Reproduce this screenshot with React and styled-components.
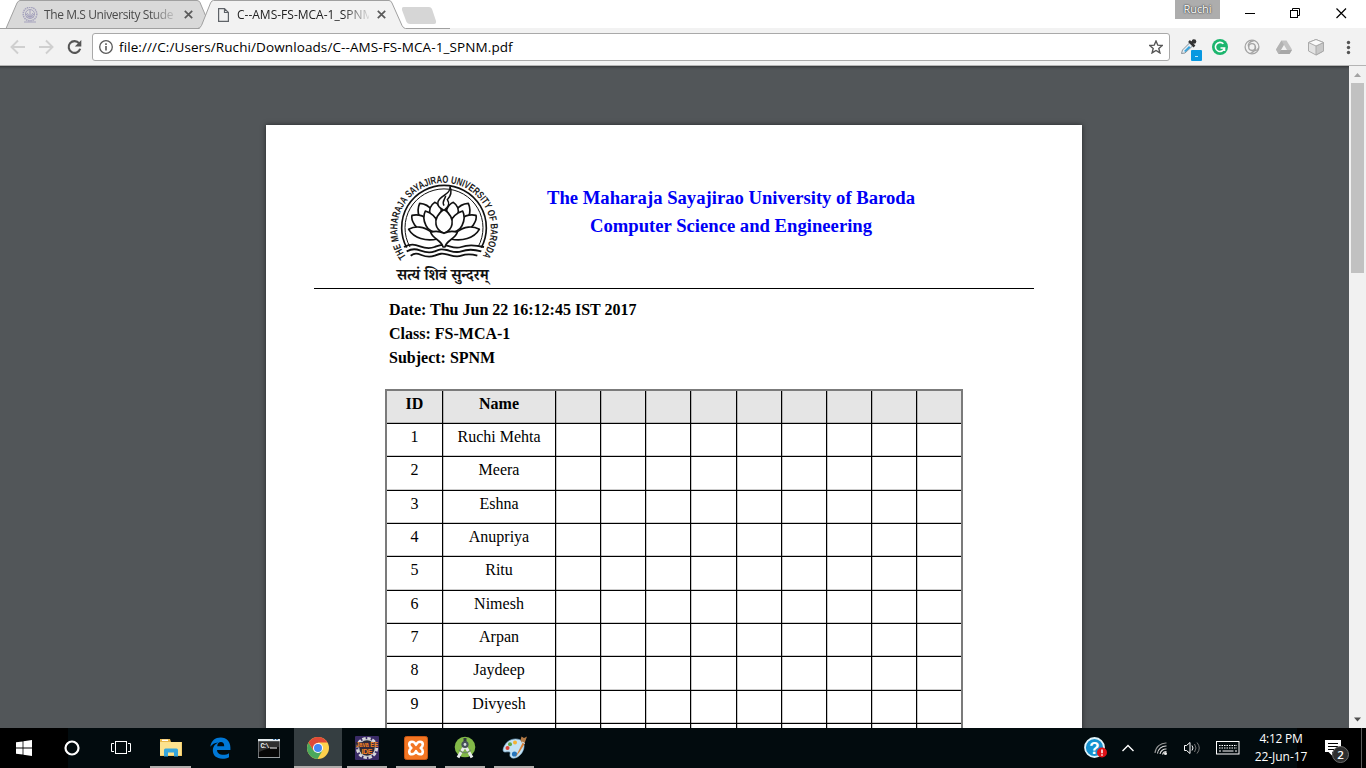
import React from "react";
import styled, { createGlobalStyle } from "styled-components";

const Global = createGlobalStyle`
  * { box-sizing: border-box; }
  body { margin: 0; overflow: hidden; background: #fff; }
`;
const ui = `"Open Sans", "Noto Sans", sans-serif`;

const Screen = styled.div`
  width: 1366px;
  height: 768px;
  display: flex;
  flex-direction: column;
  overflow: hidden;
  font-family: ${ui};
`;
const TitleBar = styled.div`
  height: 28px;
  flex: none;
  display: flex;
  align-items: flex-start;
  background: #fff;
  position: relative;
`;
const TabShapes = styled.svg`
  position: absolute;
  left: 0;
  top: 0;
`;
const Tab = styled.div`
  position: relative;
  display: flex;
  align-items: center;
  height: 28px;
  width: ${(p) => p.$w}px;
  padding: 1px 0 0 ${(p) => p.$pad}px;
  flex: none;
`;
const TabTitle = styled.span`
  width: ${(p) => p.$w}px;
  margin-left: ${(p) => p.$gap}px;
  margin-right: 8px;
  overflow: hidden;
  white-space: nowrap;
  font-size: 12px;
  line-height: 18px;
  letter-spacing: ${(p) => p.$ls}px;
  color: ${(p) => p.$color};
  mask-image: linear-gradient(to right, #000 80%, rgba(0, 0, 0, 0.1));
`;
const WindowControls = styled.div`
  margin-left: auto;
  display: flex;
`;
const Profile = styled.div`
  width: 45px;
  height: 19px;
  margin-right: 22px;
  background: #adadad;
  color: #fff;
  font-size: 11px;
  line-height: 18px;
  text-align: center;
  letter-spacing: -0.1px;
  text-shadow: 0 0 2px #333, 0 0 1px #333;
`;
const Toolbar = styled.div`
  height: 38px;
  flex: none;
  background: #f2f2f2;
  border-bottom: 1px solid #b4b4b4;
  display: flex;
  align-items: center;
  padding: 0 0 0 8px;
`;
const NavIcon = styled.svg`
  margin-right: ${(p) => p.$mr}px;
  flex: none;
`;
const Omnibox = styled.div`
  width: 1078px;
  height: 28px;
  border: 1px solid #a9a9a9;
  border-radius: 3px;
  background: #fff;
  display: flex;
  align-items: center;
  padding: 0 6px 0 6px;
`;
const Url = styled.span`
  font-size: 13.5px;
  line-height: 20px;
  color: #000;
  margin-left: 6px;
  letter-spacing: ${(p) => p.$ls}px;
  white-space: nowrap;
  flex: 1;
`;
const Extensions = styled.div`
  display: flex;
  align-items: center;
  padding-left: 11px;
`;

const Viewer = styled.div`
  height: 662px;
  flex: none;
  display: flex;
  background: #525659;
  overflow: hidden;
`;
const Canvas = styled.div`
  flex: 1;
  padding: 59px 0 0 266px;
  box-shadow: inset 0 4px 3px -3px rgba(0, 0, 0, 0.45);
`;
const Page = styled.div`
  width: 816px;
  height: 1056px;
  background: #fff;
  box-shadow: 0 0 5px rgba(0, 0, 0, 0.55);
  padding: 40px 48px;
`;
const Letterhead = styled.div`
  display: flex;
  height: 124px;
  padding-left: 66px;
  border-bottom: 1px solid #000;
`;
const Headings = styled.div`
  width: 450px;
  margin-left: -4px;
  padding-top: 19px;
  text-align: center;
  color: #0000f5;
  font: bold 18.67px/28px "Liberation Serif", serif;
`;
const Details = styled.div`
  padding: 9px 0 0 75px;
  height: 99.7px;
  font: bold 16px/24px "Liberation Serif", serif;
  color: #000;
`;
const Grid = styled.div`
  width: 578px;
  margin-left: 71px;
  border: 2px solid #7b7b7b;
  border-bottom: 0;
`;
const Row = styled.div`
  display: grid;
  grid-template-columns: 56px 113px repeat(8, 45.15px) 1fr;
  height: 33.33px;
  width: 574px;
  overflow: hidden;
  background: ${(p) => (p.$head ? "#e5e5e5" : "#fff")};
  font: ${(p) => (p.$head ? "bold" : "normal")} 16px/26px "Liberation Serif", serif;
  color: #000;
`;
const Cell = styled.div`
  border-right: 1px solid #000;
  border-bottom: 1px solid #000;
  text-align: center;
  white-space: nowrap;
  & + & { box-shadow: inset 1px 0 0 rgba(0, 0, 0, 0.22), inset 0 -1px 0 rgba(0, 0, 0, 0.2); }
  &:first-child { box-shadow: inset 0 -1px 0 rgba(0, 0, 0, 0.2); }
  &:last-child { border-right: 0; }
`;

const ScrollTrack = styled.div`
  width: 17px;
  background: #f1f1f1;
  display: flex;
  flex-direction: column;
  align-items: center;
`;
const ScrollThumb = styled.div`
  width: 13px;
  height: 190px;
  background: #c1c1c1;
  margin-bottom: auto;
`;

const Taskbar = styled.div`
  height: 40px;
  flex: none;
  display: flex;
  background: linear-gradient(to right, #000 68px, #020b0e 68px 1297px, #000 1297px);
`;
const TaskItem = styled.div`
  width: ${(p) => p.$w || 49}px;
  height: 40px;
  display: flex;
  align-items: center;
  justify-content: center;
  padding-right: 1px;
  background: ${(p) => (p.$active ? "#353e41" : "transparent")};
  background-clip: padding-box;
  border-right: ${(p) => (p.$active ? 1 : 0)}px solid transparent;
  position: relative;
  &::after {
    content: "";
    display: ${(p) => (p.$line ? "block" : "none")};
    position: absolute;
    bottom: 0;
    left: ${(p) => (p.$active ? 0 : 4)}px;
    right: ${(p) => (p.$active ? 0 : 5)}px;
    height: 2px;
    background: #b0aeac;
  }
`;
const Tray = styled.div`
  margin-left: auto;
  display: flex;
  align-items: center;
`;
const TrayIcon = styled.svg`
  margin-right: ${(p) => p.$mr}px;
  flex: none;
`;
const Clock = styled.div`
  width: 56px;
  color: #fff;
  font-size: 12px;
  line-height: 18px;
  text-align: center;
  letter-spacing: -0.25px;
  white-space: nowrap;
`;
const ClockDate = styled.div`
  letter-spacing: -0.05px;
`;
const Notifications = styled.div`
  position: relative;
  width: 41px;
  height: 40px;
  margin-left: 16px;
  &::after {
    content: "";
    position: absolute;
    right: 4px;
    top: 0;
    width: 1px;
    height: 40px;
    background: #5a5a5a;
  }
`;
const Badge = styled.span`
  position: absolute;
  left: 7px;
  top: 18px;
  width: 17px;
  height: 17px;
  border-radius: 50%;
  background: #2e2e2e;
  border: 1px solid #6c6c6c;
  color: #fff;
  font-size: 11.5px;
  font-weight: 600;
  line-height: 15px;
  text-align: center;
`;
const NoticeIcon = styled.svg`
  margin-top: 12px;
`;

const CloseX = () => (
  <svg width="9" height="9" viewBox="0 0 9 9">
    <path d="M0.8 0.8L8.2 8.2M8.2 0.8L0.8 8.2" stroke="#5a5a5a" strokeWidth="1.7" />
  </svg>
);

const Petals = () => (
  <g fill="#fff" stroke="#111" strokeWidth="5" strokeLinejoin="round">
    <path d="M118 156C112 140 114 126 119 115C136 116 148 124 156 136L160 170Z" />
    <path d="M266 156C272 140 270 126 265 115C248 116 236 124 228 136L224 170Z" />
    <path d="M150 150C146 132 152 120 164 112C174 116 180 124 184 134L182 168Z" />
    <path d="M234 150C238 132 232 120 220 112C210 116 204 124 200 134L202 168Z" />
    <path d="M104 180C96 168 94 158 96 151C116 146 138 154 150 170L160 204C134 204 114 196 104 180Z" />
    <path d="M280 180C288 168 290 158 288 151C268 146 246 154 234 170L224 204C250 204 270 196 280 180Z" />
    <path d="M86 193C106 182 132 184 152 200C160 208 166 214 172 222C138 230 102 220 86 193Z" />
    <path d="M298 193C278 182 252 184 232 200C224 208 218 214 212 222C246 230 282 220 298 193Z" />
    <path d="M138 182C130 166 130 150 136 138C156 144 168 158 174 174L184 206C160 204 144 196 138 182Z" />
    <path d="M246 182C254 166 254 150 248 138C228 144 216 158 210 174L200 206C224 204 240 196 246 182Z" />
    <path d="M192 132C210 146 219 162 216 178C214 192 203 200 192 205C181 200 170 192 168 178C165 162 174 146 192 132Z" />
    <path d="M152 202C168 196 182 200 192 205C202 200 216 196 232 202C226 222 198 226 195 246H189C186 226 158 222 152 202Z" />
  </g>
);

const Emblem = () => (
  <svg width="130" height="124" viewBox="0 0 390 372">
    <defs>
      <path id="ring" d="M79 276A140 140 0 1 1 305 276" />
    </defs>
    <text fontFamily="'Liberation Sans Narrow', 'Liberation Sans', sans-serif" fontWeight="bold" fontSize="31" fill="#1c1c1c">
      <textPath href="#ring" textLength="612" lengthAdjust="spacingAndGlyphs">THE MAHARAJA SAYAJIRAO UNIVERSITY OF BARODA</textPath>
    </text>
    <g fill="none" stroke="#111">
      <path d="M80 248A127 127 0 1 1 304 248" strokeWidth="5" />
      <path d="M90 246A117 117 0 1 1 294 246" strokeWidth="3" />
      <g strokeWidth="5.5">
        <path d="M72 246C92 236 104 238 120 244S148 252 164 246S184 238 200 242S228 252 244 246S276 238 312 246" />
        <path d="M80 259C98 250 108 252 122 257S148 265 164 259S184 251 200 255S228 265 244 259S276 251 304 259" />
        <path d="M92 272C104 263 112 265 124 270S148 278 164 272S184 264 200 268S228 278 244 272S272 266 292 272" />
      </g>
    </g>
    <Petals />
    <path d="M210 64C214 88 180 90 174 110C170 124 182 130 192 136C204 128 210 116 202 104C214 92 216 80 210 64ZM197 92C196 104 184 108 192 122" fill="#fff" stroke="#111" strokeWidth="4.5" />
    <text x="50" y="346" fontFamily="'Noto Serif Devanagari', 'Noto Sans Devanagari', 'Noto Sans', serif" fontWeight="bold" fontSize="48" fill="#111" textLength="276" lengthAdjust="spacingAndGlyphs">सत्यं शिवं सुन्दरम्</text>
  </svg>
);

const StartIcon = () => (
  <svg width="16" height="16" viewBox="0 0 16 16" fill="#fff">
    <path d="M0 2.3L6.6 1.4V7.6H0ZM7.4 1.3L16 0V7.6H7.4ZM0 8.4H6.6V14.6L0 13.7ZM7.4 8.4H16V16L7.4 14.8Z" />
  </svg>
);
const TaskViewIcon = () => (
  <svg width="22" height="16" viewBox="0 0 22 16" fill="none" stroke="#fff">
    <rect x="5.5" y="1.5" width="11" height="12" />
    <path d="M4 3.5H1.5V11.5H4M18 3.5H20.5V11.5H18" />
  </svg>
);
const FolderIcon = () => (
  <svg width="22" height="20" viewBox="0 0 22 20">
    <path d="M0 1H10L11 4H22V18H0Z" fill="#e9b84a" />
    <path d="M2 1.6H8V3H2Z" fill="#fff" />
    <path d="M0 4H21.5V17.5H0Z" fill="#fce28e" />
    <path d="M4 18.5V12Q4 10.5 5.5 10.5H16.500Q18 10.500 18 12V18.500H14V14.500H8V18.500Z" fill="#35a6dd" />
  </svg>
);
const EdgeIcon = () => (
  <svg width="21" height="22" viewBox="0 0 21 22">
    <path d="M0.300 9.800C1.200 3.500 5.200 0.400 10.700 0.400C17 0.400 20.400 5 20.400 10.500V13H7C7.200 16.500 10.200 17.800 13.200 17.800C15.500 17.800 17.500 17.200 19 16.200V20.200C17 21.300 14.800 21.700 12.300 21.700C6.500 21.700 2.800 18.500 2.800 13.300C2.800 9.800 4.600 7 8.200 5.400C4.500 5.600 2 7.300 0.300 9.800ZM7.200 9.200H14.200C14.200 6.600 13 5.100 10.900 5.100C8.800 5.100 7.500 6.600 7.200 9.200Z" fill="#0078d7" fillRule="evenodd" />
  </svg>
);
const ConsoleIcon = () => (
  <svg width="22" height="19" viewBox="0 0 22 19">
    <rect width="22" height="19" fill="#9ba0a3" />
    <rect width="22" height="2" fill="#e5ebee" />
    <path d="M15 0.500H17M18 0.500H20" stroke="#467cae" />
    <rect x="0.700" y="2.500" width="20.600" height="15.500" fill="#070707" />
    <path d="M1 3H21L21 8Q12 8 1 13Z" fill="#303030" />
    <text x="2.500" y="9.300" fontFamily="'Liberation Mono', monospace" fontWeight="bold" fontSize="6.500" fill="#f4f4f4" textLength="9">C:\</text>
    <path d="M12 9H19" stroke="#fff" />
  </svg>
);
const ChromeIcon = () => (
  <svg width="22" height="22" viewBox="0 0 22 22">
    <circle cx="11" cy="11" r="11" fill="#fdd14c" />
    <path d="M1.500 5.500A11 11 0 0 0 10.500 22L15.500 13.500L11 11L6.500 13.500Z" fill="#4aa85c" />
    <path d="M1.500 5.500A11 11 0 0 1 20.500 5.500H11L6.500 13.500Z" fill="#df4937" />
    <circle cx="11" cy="11" r="5" fill="#fff" />
    <circle cx="11" cy="11" r="4" fill="#4587f3" />
  </svg>
);
const JavaIcon = () => (
  <svg width="24" height="24" viewBox="0 0 24 24">
    <rect width="24" height="24" rx="1" fill="#3a2b66" />
    <circle cx="12" cy="12" r="9.300" fill="none" stroke="#d9d9dc" strokeWidth="3.600" strokeDasharray="3.300 1.570" />
    <circle cx="12" cy="12" r="8.300" fill="#2b2a35" stroke="#c7c7cc" strokeWidth="1.200" />
    <path d="M0 6H24V11.500H17.500V18H6.500V11.500H0Z" fill="#33283d" opacity="0.800" />
    <g fontFamily="'Liberation Sans', sans-serif" fontWeight="bold" fontSize="7" fill="#f58220">
      <text x="1" y="11.300" textLength="22" lengthAdjust="spacingAndGlyphs">Java EE</text>
      <text x="6.500" y="18.200" textLength="11">IDE</text>
    </g>
  </svg>
);
const XamppIcon = () => (
  <svg width="24" height="24" viewBox="0 0 24 24">
    <rect x="0.500" y="0.500" width="23" height="23" rx="2" fill="#f37623" stroke="#c95714" />
    <path d="M12 8.800Q10.500 5.700 8 5.700Q5.200 5.700 5.200 8.600Q5.200 10.500 7.300 12Q5.200 13.500 5.200 15.400Q5.200 18.300 8 18.300Q10.500 18.300 12 15.200Q13.500 18.300 16 18.300Q18.800 18.300 18.800 15.400Q18.800 13.500 16.700 12Q18.800 10.500 18.800 8.600Q18.800 5.700 16 5.700Q13.500 5.700 12 8.800Z" fill="none" stroke="#fff" strokeWidth="2.600" strokeLinejoin="round" />
  </svg>
);
const StudioIcon = () => (
  <svg width="22" height="24" viewBox="0 0 22 24">
    <circle cx="11" cy="11" r="10.300" fill="#82b948" />
    <path d="M11 9.500L4 21.500M11 9.500L18 21.500" stroke="#e9ecec" strokeWidth="3" />
    <path d="M5 14Q11 19.500 17 14" fill="none" stroke="#6f8a62" strokeWidth="1.300" />
    <path d="M11 2V6" stroke="#333c42" strokeWidth="3" />
    <circle cx="11" cy="8.500" r="3.600" fill="#47525a" />
    <circle cx="11" cy="8.500" r="1.400" fill="#d7dee0" />
  </svg>
);
const PaintIcon = () => (
  <svg width="25" height="24" viewBox="0 0 25 24">
    <path d="M3 9C6 3 15 1 20 5C24 8 22 16 17 20C12 24 7 22 8 18C9 15 6 16 3 16C0 16 1 12 3 9Z" fill="#c4e2f4" stroke="#7eb1d5" strokeWidth="0.600" />
    <circle cx="5.500" cy="12" r="2" fill="#dd4134" />
    <circle cx="8" cy="8.200" r="2" fill="#60a747" />
    <circle cx="13" cy="6.400" r="2" fill="#f5b230" />
    <circle cx="12.500" cy="18" r="2.600" fill="#2675bc" />
    <path d="M20.500 7L13.500 21L17.500 16L22.500 8Z" fill="#d98033" />
    <path d="M18.500 4L19.500 0.500L22 2L25 0.500L23 6L22 8L20 7Z" fill="#b27a46" />
    <path d="M20 6L23 7.500" stroke="#e8e8e8" />
  </svg>
);

const students = ["Ruchi Mehta", "Meera", "Eshna", "Anupriya", "Ritu", "Nimesh", "Arpan", "Jaydeep", "Divyesh", ""];
const blanks = Array.from({ length: 9 });

const TableRow = ({ id, name, head }) => (
  <Row $head={head}>
    <Cell>{id}</Cell>
    <Cell>{name}</Cell>
    {blanks.map((_, i) => <Cell key={i} />)}
  </Row>
);

export default function App() {
  return (
    <Screen>
      <Global />
      <TitleBar>
        <TabShapes width="450" height="29" viewBox="0 0 450 29">
          <path d="M6 28.500L17 3Q18.500 0.500 20 0.500H197Q199 0.500 200 2.500L211 28.500Z" fill="#d9d9d9" stroke="#a0a0a0" />
          <path d="M403.500 7H429Q431 7 432 9L436 21Q436.500 24 434 24H410Q407.500 24 406.500 22L402 10Q401.500 7 403.500 7Z" fill="#d6d6d6" />
          <path d="M199 29Q200.500 28 201.500 25.500L210.500 3Q211.500 0.500 213.500 0.500H389Q391 0.500 392 3L402 25.500Q403.500 28.500 405.500 28.500H450V29Z" fill="#f2f2f2" />
          <path d="M0 28.500H197.500Q200 28.500 201.500 25.500L210.500 3Q211.500 0.500 213.500 0.500H389Q391 0.500 392 3L402 25.500Q403.500 28.500 405.500 28.500H450" fill="none" stroke="#a0a0a0" />
        </TabShapes>
        <Tab $w={200} $pad={22}>
          <svg width="16" height="16" viewBox="0 0 16 16" fill="none" stroke="#a5a2bd">
            <circle cx="8" cy="7" r="6.800" strokeDasharray="1.500 0.700" strokeWidth="1.500" />
            <circle cx="8" cy="7" r="4.500" />
            <path d="M4 7Q8 13 12 7M8 3V10M5 6L8 10L11 6M4 10H12M2 15H14" />
          </svg>
          <TabTitle $w={132} $gap={6} $ls={-0.4} $color="#4b4b4b">The M.S University Stude</TabTitle>
          <CloseX />
        </Tab>
        <Tab $w={204} $pad={18}>
          <svg width="11" height="14" viewBox="0 0 11 14" fill="none" stroke="#5f6368" strokeWidth="1.200">
            <path d="M0.600 0.600H6.500L10.400 4.500V13.400H0.600ZM6.500 0.600V4.500H10.400" />
          </svg>
          <TabTitle $w={132} $gap={8} $ls={0} $color="#222">C--AMS-FS-MCA-1_SPNM</TabTitle>
          <CloseX />
        </Tab>
        <WindowControls>
          <Profile>Ruchi</Profile>
          <svg width="124" height="28" viewBox="1242 0 124 28" fill="none" stroke="#000">
            <path d="M1245 13.500H1255" />
            <rect x="1290.500" y="10.500" width="7" height="7" />
            <path d="M1292.500 10.500V8.500H1299.500V15.500H1297.500" />
            <path d="M1336.500 8.500L1346 18M1346 8.500L1336.500 18" strokeWidth="1.200" />
          </svg>
        </WindowControls>
      </TitleBar>
      <Toolbar>
        <NavIcon $mr={11} width="18" height="16" viewBox="0 0 18 16" fill="none" stroke="#cfcfcf" strokeWidth="1.900">
          <path d="M17 8H4M10 1.500L3.500 8L10 14.500" />
        </NavIcon>
        <NavIcon $mr={12} width="18" height="16" viewBox="0 0 18 16" fill="none" stroke="#cfcfcf" strokeWidth="1.900">
          <path d="M2 8H15M9 1.500L15.500 8L9 14.500" />
        </NavIcon>
        <NavIcon $mr={10} width="15" height="16" viewBox="0 0 15 16">
          <path d="M12.200 4.300A5.900 5.900 0 1 0 13.200 9.800" fill="none" stroke="#555" strokeWidth="2.100" />
          <path d="M14.300 1V7.500H7.800Z" fill="#555" />
        </NavIcon>
        <Omnibox>
          <svg width="14" height="14" viewBox="0 0 14 14" fill="none" stroke="#5a5a5a">
            <circle cx="7" cy="7" r="6.300" strokeWidth="1.300" />
            <path d="M7 6V10.500M7 3.300V4.900" strokeWidth="1.600" />
          </svg>
          <Url $ls={0.1}>file:///C:/Users/Ruchi/Downloads/C--AMS-FS-MCA-1_SPNM.pdf</Url>
          <svg width="14" height="14" viewBox="0 0 14 14" fill="none" stroke="#555" strokeWidth="1.400">
            <path d="M7 1L8.800 5.200L13.200 5.500L9.800 8.400L10.900 12.900L7 10.500L3.100 12.900L4.200 8.400L0.800 5.500L5.200 5.200Z" />
          </svg>
        </Omnibox>
        <Extensions>
          <svg width="185" height="28" viewBox="1181 33 185 28">
            <path d="M1181.500 53.500L1182.500 50L1190 42.500L1193 45.500L1185 53Z" fill="#e3edf4" stroke="#87929a" />
            <path d="M1184 51L1189 46L1190.500 47.500L1185.500 52Z" fill="#35a4dd" />
            <path d="M1189 41L1194.500 46.500M1190.500 44L1194.500 40.500" stroke="#333" strokeWidth="2.500" />
            <circle cx="1194" cy="41.500" r="2.300" fill="#333" />
            <rect x="1191" y="50" width="11" height="11" rx="1" fill="#0898e1" />
            <path d="M1195 56.500H1198" stroke="#b9e6fa" />
            <circle cx="1220" cy="47" r="8" fill="#1cb66e" />
            <path d="M1223.400 43.800A4.600 4.600 0 1 0 1224.500 48H1220.500M1224.500 48V51" fill="none" stroke="#fff" strokeWidth="1.600" />
            <g fill="none" stroke="#a4a4a4" strokeWidth="1.300">
              <circle cx="1252" cy="47" r="6.900" />
              <circle cx="1252" cy="47" r="3.300" />
              <path d="M1255.300 46Q1257 51 1250 53.500M1248.700 47Q1247 42 1254 40.500M1251 50.300Q1256 52 1258.700 48" />
            </g>
            <path d="M1281.500 40.500H1286.500L1292 49.500L1289.500 54H1278.500L1276 49.500Z" fill="#c3c3c3" />
            <path d="M1281.500 40.500L1284 45L1278.500 54L1276 49.500Z" fill="#b3b3b3" />
            <path d="M1284 45L1287 50H1281Z" fill="#f2f2f2" />
            <path d="M1278.500 54L1281 50H1292L1289.500 54Z" fill="#a7a7a7" />
            <g stroke="#aaa" strokeLinejoin="round">
              <path d="M1316 39.500L1323.500 42.500V51L1316 55L1308.500 51V42.500Z" fill="#e3e3e3" />
              <path d="M1316 46V55L1323.500 51V42.500Z" fill="#c8c8c8" />
              <path d="M1308.500 42.500L1316 46L1323.500 42.500L1316 39.500Z" fill="#fafafa" />
            </g>
            <g fill="#555">
              <circle cx="1348.500" cy="42.500" r="1.700" />
              <circle cx="1348.500" cy="47.500" r="1.700" />
              <circle cx="1348.500" cy="52.500" r="1.700" />
            </g>
          </svg>
        </Extensions>
      </Toolbar>

      <Viewer>
        <Canvas>
          <Page>
            <Letterhead>
              <Emblem />
              <Headings>
                <div>The Maharaja Sayajirao University of Baroda</div>
                <div>Computer Science and Engineering</div>
              </Headings>
            </Letterhead>
            <Details>
              <div>Date: Thu Jun 22 16:12:45 IST 2017</div>
              <div>Class: FS-MCA-1</div>
              <div>Subject: SPNM</div>
            </Details>
            <Grid>
              <TableRow head id="ID" name="Name" />
              {students.map((s, i) => (
                <TableRow key={i} id={s ? i + 1 : ""} name={s} />
              ))}
            </Grid>
          </Page>
        </Canvas>
        <ScrollTrack>
          <svg width="17" height="17" viewBox="0 0 17 17"><path d="M5 11L8.500 7L12 11Z" fill="#a3a3a3" /></svg>
          <ScrollThumb />
          <svg width="17" height="17" viewBox="0 0 17 17"><path d="M5 6.500L8.500 10.500L12 6.500Z" fill="#505050" /></svg>
        </ScrollTrack>
      </Viewer>

      <Taskbar>
        <TaskItem $w={49}><StartIcon /></TaskItem>
        <TaskItem $w={47}>
          <svg width="16" height="16" viewBox="0 0 16 16"><circle cx="8" cy="8" r="6.500" fill="none" stroke="#fff" strokeWidth="2.200" /></svg>
        </TaskItem>
        <TaskItem $w={50}><TaskViewIcon /></TaskItem>
        <TaskItem $w={50} $line><FolderIcon /></TaskItem>
        <TaskItem><EdgeIcon /></TaskItem>
        <TaskItem><ConsoleIcon /></TaskItem>
        <TaskItem $line $active><ChromeIcon /></TaskItem>
        <TaskItem $line><JavaIcon /></TaskItem>
        <TaskItem $line><XamppIcon /></TaskItem>
        <TaskItem $line><StudioIcon /></TaskItem>
        <TaskItem $line><PaintIcon /></TaskItem>
        <Tray>
          <TrayIcon $mr={15} width="23" height="22" viewBox="0 0 23 22">
            <circle cx="10.500" cy="10.500" r="9.500" fill="#1691cf" stroke="#dff3fb" strokeWidth="1.800" />
            <text x="10.500" y="16.500" textAnchor="middle" fontFamily="'Liberation Sans', sans-serif" fontWeight="bold" fontSize="17" fill="#fff">?</text>
            <circle cx="18" cy="15.500" r="5" fill="#e01218" />
            <path d="M18 12.500V16.300M18 17.300V18.700" stroke="#fff" strokeWidth="1.500" />
          </TrayIcon>
          <TrayIcon $mr={20} width="12" height="8" viewBox="0 0 12 8"><path d="M0.500 7L6 1.500L11.500 7" fill="none" stroke="#fff" strokeWidth="1.400" /></TrayIcon>
          <TrayIcon $mr={16} width="14" height="14" viewBox="0 0 14 14" fill="none" stroke="#ddd" strokeWidth="1.100">
            <path d="M1 12A11 11 0 0 1 12.500 2" stroke="#999" />
            <path d="M3.500 12.500A8.500 8.500 0 0 1 12.500 5M6 13A6 6 0 0 1 12.500 8M8.500 13.500A4 4 0 0 1 12.500 10.500" />
            <circle cx="11.500" cy="12.500" r="1" fill="#fff" />
          </TrayIcon>
          <TrayIcon $mr={15} width="17" height="14" viewBox="0 0 17 14" fill="none" stroke="#fff">
            <path d="M0.500 4.500H2.500L6 1.500V12.500L2.500 9.500H0.500Z" />
            <path d="M8 4.500Q10 7 8 9.500" />
            <path d="M10.500 3Q13.500 7 10.500 11M13 1.500Q17.500 7 13 12.500" stroke="#777" />
          </TrayIcon>
          <TrayIcon $mr={13} width="24" height="14" viewBox="0 0 24 14" fill="none" stroke="#fff">
            <rect x="0.500" y="0.500" width="22.500" height="12.500" />
            <path d="M3 4.500H21M3 7H21" strokeDasharray="1.500 1" />
            <path d="M3 10H5M6.500 10H17.500M19 10H21" />
          </TrayIcon>
          <Clock>
            <div>4:12 PM</div>
            <ClockDate>22-Jun-17</ClockDate>
          </Clock>
          <Notifications>
            <NoticeIcon width="16" height="16" viewBox="0 0 16 16">
              <path d="M0 0H16V12H7V15.500L3.500 12H0Z" fill="#fff" />
              <path d="M3 3.500H13M3 6.500H13M3 9.500H9" stroke="#000" />
            </NoticeIcon>
            <Badge>2</Badge>
          </Notifications>
        </Tray>
      </Taskbar>
    </Screen>
  );
}
